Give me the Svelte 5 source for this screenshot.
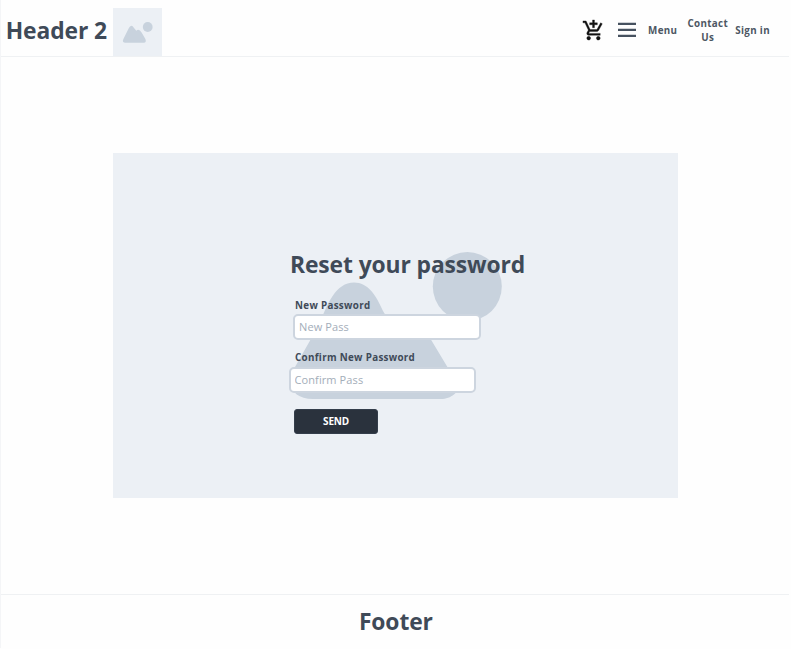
<script>
  let newPass = $state('');
  let confirmPass = $state('');
</script>

<div class="page">
  <header>
    <h2>Header 2</h2>
    <svg class="logo" viewBox="0 0 49 48" aria-hidden="true">
      <rect width="49" height="48" fill="#ecf0f5" />
      <circle cx="34.7" cy="19" r="4.9" fill="#c8d2dd" />
      <path fill="#c8d2dd" d="M10.3 31.2 L15.6 20.5 Q18.2 15.500 21 20 L23.300 22.800 Q26 20.300 28.600 24.500 L32.400 31 Q33.700 34.500 30.800 34.800 H12.400 Q8.800 34.500 10.300 31.200Z" />
    </svg>
    <nav>
      <svg class="cart" viewBox="0 0 24 24" aria-hidden="true">
        <path fill="#111" stroke="#111" stroke-width=".35" d="M11 9h2V6h3V4h-3V1h-2v3H8v2h3v3zm-4 9c-1.1 0-1.99.9-1.99 2S5.900 22 7 22s2-.9 2-2-.9-2-2-2zm10 0c-1.1 0-1.99.9-1.99 2s.89 2 1.99 2 2-.9 2-2-.9-2-2-2zm-9.830-3.250l.03-.12.900-1.630h7.450c.75 0 1.410-.41 1.750-1.030l3.860-7.010L19.420 4h-.01l-1.100 2-2.760 5H8.530l-.13-.27L6.160 6l-.95-2-.94-2H1v2h2l3.600 7.590-1.350 2.450c-.16.280-.25.610-.25.960 0 1.100.9 2 2 2h12v-2H7.420c-.13 0-.25-.11-.25-.25z" />
      </svg>
      <svg class="burger" viewBox="0 0 18 16" aria-hidden="true">
        <path d="M0 1.900h18M0 7.900h18M0 13.900h18" stroke="#46515f" stroke-width="2.300" />
      </svg>
      <a class="menu">Menu</a>
      <a class="contact">Contact<br />Us</a>
      <a class="sign">Sign in</a>
    </nav>
  </header>

  <main>
    <section class="hero">
      <svg class="backdrop" viewBox="0 0 565 345" aria-hidden="true">
        <circle cx="354.300" cy="133.500" r="34.500" fill="#c8d2dd" />
        <path fill="#c8d2dd" d="M182 214 L207 170 C214 151 223 129.500 241 129.500 C255 129.500 263 142 270 158 L284 181 C291 168 305 168 314 180 L335 215 L345 231 C347 239 338 246 328 246 H200 C186 246 178 239 178 230 Q178 221 182 214Z" />
      </svg>
      <form onsubmit={(e) => e.preventDefault()}>
        <h1>Reset your password</h1>
        <label for="new">New Password</label>
        <input id="new" type="text" placeholder="New Pass" bind:value={newPass} />
        <label class="second" for="confirm">Confirm New Password</label>
        <input class="shifted" id="confirm" type="text" placeholder="Confirm Pass" bind:value={confirmPass} />
        <button>SEND</button>
      </form>
    </section>
  </main>

  <footer><h2>Footer</h2></footer>
</div>

<style>
  :global(body) {
    background: #fefefe;
  }
  .page {
    box-sizing: border-box;
    width: 789px;
    height: 648px;
    display: flex;
    flex-direction: column;
    border-left: 1px solid #f4f5f7;
    font-family: 'Open Sans', 'Noto Sans', sans-serif;
    color: #3f4a58;
  }
  h1, h2 {
    margin: 0;
    font-size: 24px;
    line-height: 32px;
    font-weight: 700;
    letter-spacing: -0.1px;
    white-space: nowrap;
    transform: scaleX(0.951);
    transform-origin: left;
  }
  header {
    box-sizing: border-box;
    height: 57px;
    flex: none;
    display: flex;
    border-bottom: 1px solid #eff1f3;
  }
  header h2 {
    width: 107px;
    padding: 14px 0 0 5px;
    box-sizing: border-box;
  }
  .logo {
    width: 49px;
    height: 48px;
    margin: 8px 0 0 5px;
  }
  nav {
    margin-left: auto;
    padding-right: 19px;
    height: 60px;
    display: flex;
    align-items: center;
    font-size: 9.8px;
    line-height: 14px;
    font-weight: 700;
    letter-spacing: 0.36px;
    text-align: center;
    white-space: nowrap;
    color: #4d5763;
  }
  nav a {
    padding-top: 2px;
  }
  .cart {
    width: 23px;
    height: 23px;
  }
  .burger {
    width: 18px;
    height: 16px;
    margin-left: 13px;
  }
  .menu {
    margin-left: 12px;
  }
  .contact {
    margin-left: 10px;
  }
  .sign {
    margin-left: 7px;
  }
  main {
    flex: 1;
    padding: 96px 0 0 112px;
  }
  .hero {
    display: grid;
    width: 565px;
    height: 345px;
    background: #ecf0f5;
  }
  .backdrop,
  form {
    grid-area: 1 / 1;
  }
  form {
    z-index: 1;
    display: flex;
    flex-direction: column;
    align-items: flex-start;
    padding: 95px 0 0 177px;
  }
  label {
    margin: 19px 0 0 5px;
    font-size: 9.8px;
    line-height: 14px;
    font-weight: 700;
    letter-spacing: 0.32px;
  }
  label.second {
    margin-top: 11px;
  }
  input {
    box-sizing: border-box;
    width: 188px;
    height: 26px;
    margin: 1px 0 0 3px;
    padding: 0 4px 1px;
    border: 2px solid #cdd5df;
    border-radius: 5px;
    background: #fff;
    font: 11px 'Open Sans', sans-serif;
    letter-spacing: 0.1px;
    color: #3f4a58;
  }
  input.shifted {
    width: 187px;
    margin: 2px 0 0 -1px;
    padding-left: 3.5px;
  }
  input::placeholder {
    color: #a3adb9;
  }
  button {
    width: 84px;
    height: 25px;
    margin: 16px 0 0 4px;
    padding: 0 0 1px;
    border: 1px solid #343e4b;
    border-radius: 3px;
    background: #2a323d;
    color: #fff;
    font: 700 10px 'Open Sans', sans-serif;
    letter-spacing: -0.2px;
  }
  footer {
    box-sizing: border-box;
    height: 54px;
    display: flex;
    justify-content: center;
    border-top: 1px solid #eff1f3;
    padding: 10px 0 0 1px;
  }
  footer h2 {
    transform-origin: center;
  }
</style>
